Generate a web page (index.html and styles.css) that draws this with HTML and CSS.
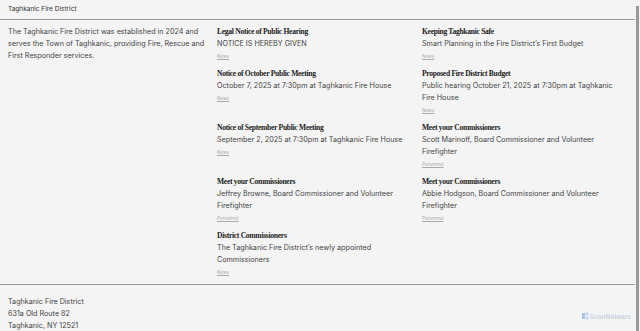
FILE: index.html
```html
<!DOCTYPE html>
<html lang="en">
<head>
  <meta charset="UTF-8">
  <title>Taghkanic Fire District</title>
  <link rel="stylesheet" href="styles.css">
</head>
<body>
  <div class="page">
    <header class="site-header">Taghkanic Fire District</header>

    <main class="main">
      <p class="intro">The Taghkanic Fire District was established in 2024 and serves the Town of Taghkanic, providing Fire, Rescue and First Responder services.</p>

      <div class="posts">
        <div class="post">
          <h3>Legal Notice of Public Hearing</h3>
          <p>NOTICE IS HEREBY GIVEN</p>
          <a href="#" class="tag">News</a>
        </div>
        <div class="post">
          <h3>Keeping Taghkanic Safe</h3>
          <p>Smart Planning in the Fire District’s First Budget</p>
          <a href="#" class="tag">News</a>
        </div>
        <div class="post">
          <h3>Notice of October Public Meeting</h3>
          <p>October 7, 2025 at 7:30pm at Taghkanic Fire House</p>
          <a href="#" class="tag">News</a>
        </div>
        <div class="post">
          <h3>Proposed Fire District Budget</h3>
          <p>Public hearing October 21, 2025 at 7:30pm at Taghkanic Fire House</p>
          <a href="#" class="tag">News</a>
        </div>
        <div class="post">
          <h3>Notice of September Public Meeting</h3>
          <p>September 2, 2025 at 7:30pm at Taghkanic Fire House</p>
          <a href="#" class="tag">News</a>
        </div>
        <div class="post">
          <h3>Meet your Commissioners</h3>
          <p>Scott Marinoff, Board Commissioner and Volunteer Firefighter</p>
          <a href="#" class="tag">Personnel</a>
        </div>
        <div class="post">
          <h3>Meet your Commissioners</h3>
          <p>Jeffrey Browne, Board Commissioner and Volunteer Firefighter</p>
          <a href="#" class="tag">Personnel</a>
        </div>
        <div class="post">
          <h3>Meet your Commissioners</h3>
          <p>Abbie Hodgson, Board Commissioner and Volunteer Firefighter</p>
          <a href="#" class="tag">Personnel</a>
        </div>
        <div class="post">
          <h3>District Commissioners</h3>
          <p>The Taghkanic Fire District’s newly appointed Commissioners</p>
          <a href="#" class="tag">News</a>
        </div>
      </div>
    </main>

    <footer class="site-footer">
      <p>Taghkanic Fire District</p>
      <p>631a Old Route 82</p>
      <p>Taghkanic, NY 12521</p>
    </footer>
  </div>

  <div class="scrollbar"></div>

  <div class="watermark">
    <svg width="7" height="8" viewBox="0 0 7 8">
      <rect x="0" y="1" width="3" height="6" fill="#a9c3ea"/>
      <path d="M3.5 0.5 H6.5 V3 H4.8 V4 H6.5 V7.5 H3.5 V5 H5.2 V4 H3.5 Z" fill="#c3d4ef"/>
    </svg>
    <span>ScanMalware</span>
  </div>
</body>
</html>
```

FILE: styles.css
```css
html, body {
  margin: 0;
  padding: 0;
  overflow: hidden;
}

body {
  font-family: Inter, 'Liberation Sans', sans-serif;
  background: #f4f4f4;
  color: #444;
}

.page {
  width: 635px;
}

.site-header {
  padding: 4px 8px;
  font-size: 6.5px;
  line-height: 11px;
  color: #333;
  border-bottom: 1px solid #999;
}

.main {
  display: grid;
  grid-template-columns: 199px 1fr;
  gap: 10px;
  padding: 6px 8px 7px;
}

.intro {
  margin: 0;
  font-size: 7.2px;
  line-height: 12px;
}

.posts {
  display: grid;
  grid-template-columns: 195px 205px;
  column-gap: 10px;
  row-gap: 7px;
  align-items: start;
}

.post h3 {
  margin: 0;
  font-family: 'Liberation Serif', serif;
  font-weight: bold;
  font-size: 7.6px;
  line-height: 12px;
  letter-spacing: -0.3px;
  color: #222;
}

.post p {
  margin: 0;
  font-size: 7.2px;
  line-height: 12px;
}

.tag {
  display: block;
  width: max-content;
  margin-top: 2px;
  font-size: 4.6px;
  line-height: 9px;
  color: #aaa;
  text-decoration: underline;
}

.site-footer {
  border-top: 1px solid #999;
  padding: 11px 8px 0;
  font-size: 7.2px;
  line-height: 12px;
  color: #444;
}

.site-footer p {
  margin: 0;
}

.scrollbar {
  position: fixed;
  right: 1px;
  top: 6px;
  bottom: 0;
  width: 3px;
  background: #999;
}

.watermark {
  position: fixed;
  right: 9px;
  bottom: 11px;
  display: flex;
  align-items: center;
  gap: 1px;
  font-family: 'Liberation Sans', sans-serif;
  font-weight: bold;
  font-size: 6.5px;
  color: #c9d2de;
}
```
